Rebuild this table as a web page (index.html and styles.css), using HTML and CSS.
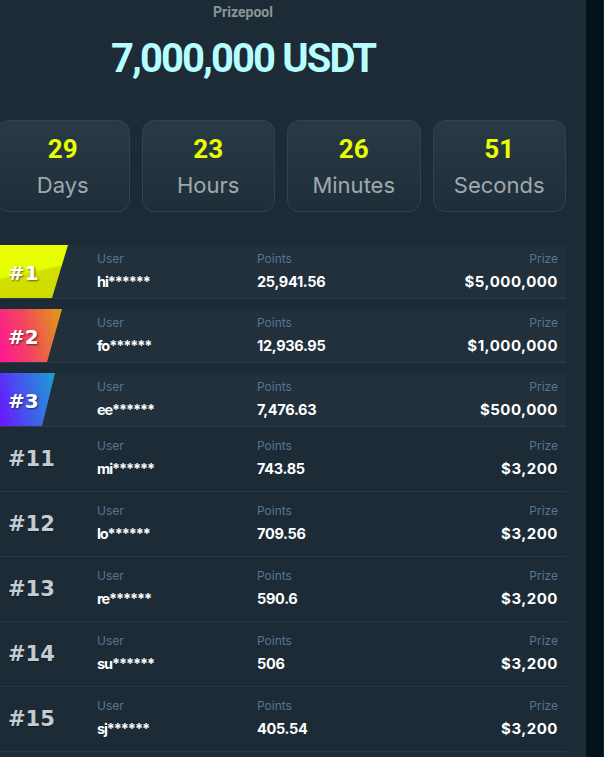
FILE: index.html
```html
<!DOCTYPE html>
<html lang="en">
<head>
<meta charset="utf-8">
<title>Prizepool Leaderboard</title>
<link rel="stylesheet" href="styles.css">
</head>
<body>
<div class="page">
  <main class="panel">
    <header class="pool">
      <div class="pool-label">Prizepool</div>
      <div class="pool-amount">7,000,000 USDT</div>
    </header>

    <div class="countdown">
      <div class="tile"><div class="tile-num">29</div><div class="tile-label">Days</div></div>
      <div class="tile"><div class="tile-num">23</div><div class="tile-label">Hours</div></div>
      <div class="tile"><div class="tile-num">26</div><div class="tile-label">Minutes</div></div>
      <div class="tile"><div class="tile-num">51</div><div class="tile-label">Seconds</div></div>
    </div>

    <ul class="board">
      <li class="row row-top">
        <div class="rank"><span class="badge badge-1">#1</span></div>
        <div class="field user"><span class="label">User</span><span class="value">hi******</span></div>
        <div class="field points"><span class="label">Points</span><span class="value">25,941.56</span></div>
        <div class="field prize"><span class="label">Prize</span><span class="value">$5,000,000</span></div>
      </li>
      <li class="row row-top">
        <div class="rank"><span class="badge badge-2">#2</span></div>
        <div class="field user"><span class="label">User</span><span class="value">fo******</span></div>
        <div class="field points"><span class="label">Points</span><span class="value">12,936.95</span></div>
        <div class="field prize"><span class="label">Prize</span><span class="value">$1,000,000</span></div>
      </li>
      <li class="row row-top">
        <div class="rank"><span class="badge badge-3">#3</span></div>
        <div class="field user"><span class="label">User</span><span class="value">ee******</span></div>
        <div class="field points"><span class="label">Points</span><span class="value">7,476.63</span></div>
        <div class="field prize"><span class="label">Prize</span><span class="value">$500,000</span></div>
      </li>
      <li class="row">
        <div class="rank"><span class="rank-num">#11</span></div>
        <div class="field user"><span class="label">User</span><span class="value">mi******</span></div>
        <div class="field points"><span class="label">Points</span><span class="value">743.85</span></div>
        <div class="field prize"><span class="label">Prize</span><span class="value">$3,200</span></div>
      </li>
      <li class="row">
        <div class="rank"><span class="rank-num">#12</span></div>
        <div class="field user"><span class="label">User</span><span class="value">lo******</span></div>
        <div class="field points"><span class="label">Points</span><span class="value">709.56</span></div>
        <div class="field prize"><span class="label">Prize</span><span class="value">$3,200</span></div>
      </li>
      <li class="row">
        <div class="rank"><span class="rank-num">#13</span></div>
        <div class="field user"><span class="label">User</span><span class="value">re******</span></div>
        <div class="field points"><span class="label">Points</span><span class="value">590.6</span></div>
        <div class="field prize"><span class="label">Prize</span><span class="value">$3,200</span></div>
      </li>
      <li class="row">
        <div class="rank"><span class="rank-num">#14</span></div>
        <div class="field user"><span class="label">User</span><span class="value">su******</span></div>
        <div class="field points"><span class="label">Points</span><span class="value">506</span></div>
        <div class="field prize"><span class="label">Prize</span><span class="value">$3,200</span></div>
      </li>
      <li class="row">
        <div class="rank"><span class="rank-num">#15</span></div>
        <div class="field user"><span class="label">User</span><span class="value">sj******</span></div>
        <div class="field points"><span class="label">Points</span><span class="value">405.54</span></div>
        <div class="field prize"><span class="label">Prize</span><span class="value">$3,200</span></div>
      </li>
    </ul>
  </main>
  <aside class="rail"></aside>
</div>
</body>
</html>
```

FILE: styles.css
```css
* { box-sizing: border-box; }

html, body {
  margin: 0;
  padding: 0;
  background: #1c2b36;
}

body {
  font-family: "Inter", "Roboto", "Liberation Sans", sans-serif;
  color: #ffffff;
  overflow: hidden;
}

.page {
  display: flex;
  width: 604px;
  height: 757px;
  overflow: hidden;
}

.panel {
  width: 586px;
  flex: none;
  background: #1c2b36;
  overflow: hidden;
}

.rail {
  flex: 1;
  background: #03121b;
  border-right: 1px solid #15242e;
}

/* Prize pool header */
.pool {
  width: 486px;
  text-align: center;
  padding-top: 4px;
}

.pool-label {
  font-family: "Roboto", "Liberation Sans", sans-serif;
  font-weight: 700;
  font-size: 14px;
  line-height: 16px;
  color: #8c9499;
}

.pool-amount {
  margin-top: 15px;
  font-family: "Roboto", "Liberation Sans", sans-serif;
  font-weight: 700;
  font-size: 40px;
  line-height: 48px;
  letter-spacing: -1.9px;
  color: #b5fdff;
}

/* Countdown */
.countdown {
  display: grid;
  grid-template-columns: repeat(4, 1fr);
  gap: 12px;
  width: 570px;
  margin: 37px 0 0 -4px;
}

.tile {
  height: 92px;
  padding-top: 13px;
  border: 1px solid #304350;
  border-radius: 12px;
  background: linear-gradient(180deg, #293a45 0%, #1f2f3a 100%);
  text-align: center;
}

.tile-num {
  font-family: "Roboto", "Liberation Sans", sans-serif;
  font-weight: 700;
  font-size: 26px;
  line-height: 30px;
  color: #e9ff00;
}

.tile-label {
  margin-top: 7px;
  font-size: 22px;
  line-height: 28px;
  color: #a0a8ad;
}

/* Leaderboard */
.board {
  list-style: none;
  margin: 33px 0 0;
  padding: 0;
  width: 566px;
}

.row {
  display: flex;
  align-items: stretch;
  border-bottom: 1px solid #263949;
}

.row-top {
  background: #21303b;
  border-bottom-color: #2b3e4e;
  margin-bottom: 10px;
}

.row-top:nth-child(3) {
  margin-bottom: 0;
}

.rank {
  width: 97px;
  flex: none;
  display: flex;
  align-items: center;
}

.rank-num {
  padding-left: 8px;
  font-family: "DejaVu Sans", sans-serif;
  font-weight: 700;
  font-size: 21px;
  color: #c4ccd1;
  text-shadow: 0 1px 1px rgba(0, 0, 0, 0.35);
}

.badge {
  align-self: stretch;
  display: flex;
  align-items: center;
  padding: 3px 0 0 8px;
  font-family: "DejaVu Sans", sans-serif;
  font-weight: 700;
  font-size: 20px;
  color: #ffffff;
  text-shadow: 1px 1px 2px rgba(0, 0, 0, 0.55);
}

.badge-1 {
  width: 68px;
  clip-path: polygon(0 0, 100% 0, calc(100% - 16px) 100%, 0 100%);
  background: linear-gradient(168deg, #ecff05 0%, #e6fe00 48%, #d3df00 52%, #cfd900 100%);
}

.badge-2 {
  width: 62px;
  clip-path: polygon(0 0, 100% 0, calc(100% - 15px) 100%, 0 100%);
  background: linear-gradient(75deg, #ff1496 0%, #f2465f 45%, #dea012 100%);
}

.badge-3 {
  width: 55px;
  clip-path: polygon(0 0, 100% 0, calc(100% - 13px) 100%, 0 100%);
  background: linear-gradient(75deg, #6a12ff 0%, #4a4ff0 40%, #1b9fd4 100%);
}

.field {
  display: flex;
  flex-direction: column;
  gap: 6px;
  padding-top: 12px;
  padding-bottom: 13px;
}

.row-top .field {
  padding-top: 7px;
  padding-bottom: 7px;
}

.user { width: 160px; flex: none; }
.points { flex: 1; }
.prize { align-items: flex-end; padding-right: 8px; }

.label {
  font-size: 12px;
  line-height: 14px;
  color: #587591;
}

.value {
  font-family: "Inter", "Roboto", sans-serif;
  font-weight: 700;
  font-size: 14.5px;
  line-height: 19px;
  letter-spacing: -0.2px;
  color: #ffffff;
}

.user .value {
  letter-spacing: -1.1px;
}

.points .value {
  letter-spacing: -0.3px;
}

.prize .value {
  font-size: 15px;
  letter-spacing: 0.5px;
}
```
